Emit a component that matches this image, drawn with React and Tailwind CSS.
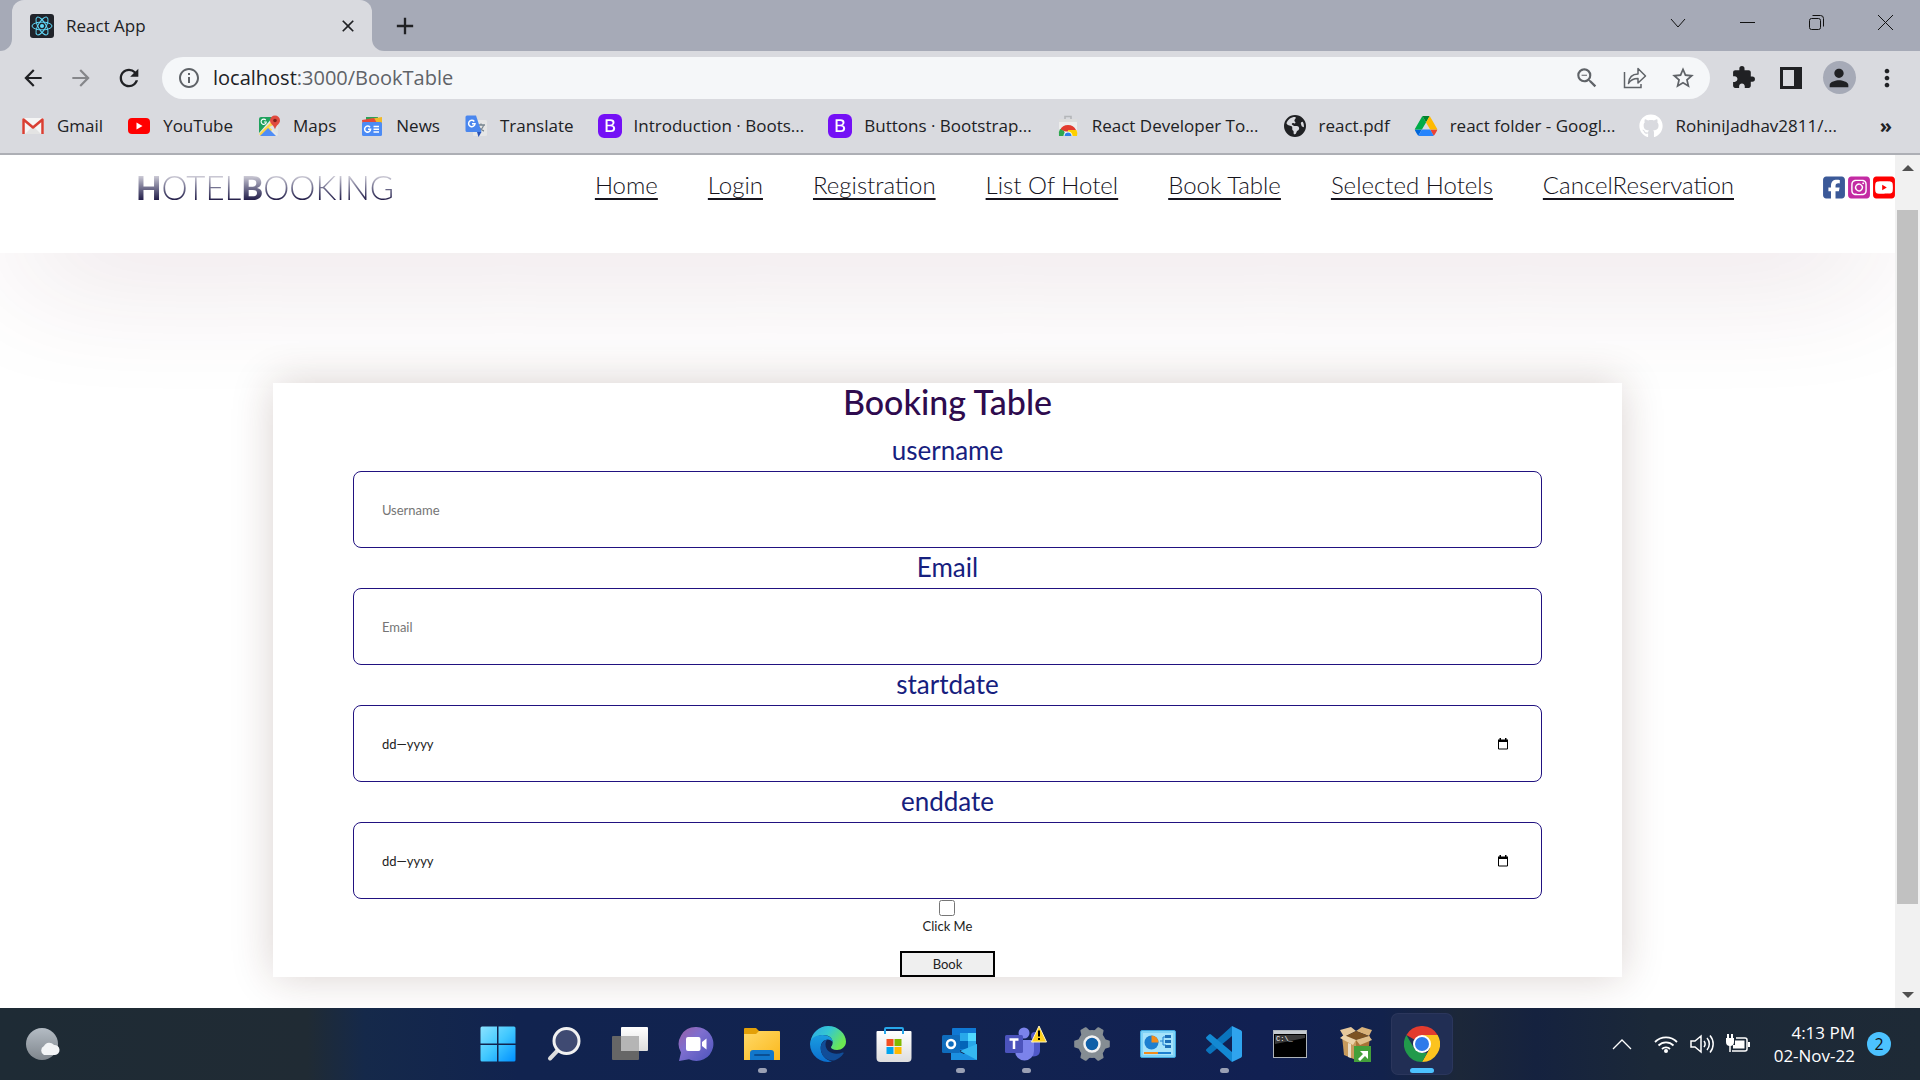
import React from "react";
import {
  MdAdd, MdArrowBack, MdArrowForward, MdClose, MdExtension, MdInfoOutline,
  MdMoreVert, MdPerson, MdRefresh, MdStarBorder, MdZoomOut,
} from "react-icons/md";
import { FaEarthAmericas, FaGithub, FaSquareFacebook, FaSquareInstagram, FaSquareYoutube } from "react-icons/fa6";
import { BsBootstrapFill } from "react-icons/bs";

const UI = "font-['Open_Sans','Noto_Sans',sans-serif]";
const PAGE = "font-['Lato','Open_Sans',sans-serif]";

/* ---------- browser icons ---------- */

const ReactLogo = () => (
  <svg viewBox="0 0 24 24" className="size-6 shrink-0">
    <rect width="24" height="24" rx="3" fill="#20232a" />
    <g fill="none" stroke="#61dafb" strokeWidth="1">
      <ellipse cx="12" cy="12" rx="10" ry="3.9" />
      <ellipse cx="12" cy="12" rx="10" ry="3.9" transform="rotate(60 12 12)" />
      <ellipse cx="12" cy="12" rx="10" ry="3.9" transform="rotate(120 12 12)" />
    </g>
    <circle cx="12" cy="12" r="2" fill="#61dafb" />
  </svg>
);

const GmailIcon = () => (
  <svg viewBox="0 0 24 24" className="size-6">
    <rect x="1" y="4" width="22" height="16" rx="1.5" fill="#f5f5f5" />
    <path d="M4 20 12 12l8 8z" fill="#e3e3e3" />
    <path d="M2.500 20V5.500L12 13.500l9.500-8V20" fill="none" stroke="#d93f33" strokeWidth="2.500" strokeLinejoin="round" />
  </svg>
);

const YouTubeIcon = () => (
  <svg viewBox="0 0 24 24" className="size-6">
    <rect x="1" y="4" width="22" height="16" rx="4" fill="#f00" />
    <path d="M9.500 8.500 15.500 12l-6 3.500z" fill="#fff" />
  </svg>
);

const MapsIcon = () => (
  <svg viewBox="0 0 24 24" className="size-6">
    <rect x="2" y="3" width="19" height="19" rx="2" fill="#e8e8e8" />
    <path d="M2 5a2 2 0 0 1 2-2h12L2 19z" fill="#1fa15d" />
    <path d="M2 20 17 5l4 2v3L9 22H4z" fill="#ffd347" />
    <path d="m11 14-8 8h16z" fill="#4f8df6" />
    <path d="m12 13 9 8V9z" fill="#dfe3e6" />
    <path d="M18 1.500a5 5 0 0 1 5 5c0 3.500-4 4.500-5 9-1-4.500-5-5.500-5-9a5 5 0 0 1 5-5z" fill="#e04a3f" />
    <circle cx="18" cy="6.500" r="1.800" fill="#7d2018" />
    <path d="M8.800 6.200A2.600 2.600 0 1 0 9.300 8H7" fill="none" stroke="#fff" strokeWidth="1.100" />
  </svg>
);

const NewsIcon = () => (
  <svg viewBox="0 0 24 24" className="size-6">
    <path d="M6 3h12v10H6z" fill="#2ea055" />
    <path d="m10 5 12-2v10H10z" fill="#f0b928" />
    <path d="m2 6 12-2 6 10H3z" fill="#e5493a" />
    <rect x="2" y="8" width="20" height="14" rx="1.500" fill="#4c8bf5" />
    <path d="M10 13.300a3 3 0 1 0 .6 2H8" fill="none" stroke="#fff" strokeWidth="1.500" />
    <path d="M13.500 12.500H19M13.500 15.200H19M13.500 18H19" stroke="#fff" strokeWidth="1.500" />
  </svg>
);

const TranslateIcon = () => (
  <svg viewBox="0 0 24 24" className="size-6">
    <rect x="9" y="6" width="14" height="16" rx="1.500" fill="#e6e6e6" />
    <path d="M13 11h8M17 9.500V11m2.500 0c-.5 3-3 5-5 6m.5-4c1 2 3 3.500 5 4" fill="none" stroke="#7a8790" strokeWidth="1.300" />
    <path d="M3 1.500h9L17.500 18H3A1.500 1.500 0 0 1 1.500 16.500V3A1.500 1.500 0 0 1 3 1.500z" fill="#4a86ee" />
    <path d="m13 18 1.500 5 3-5z" fill="#2a53b5" />
    <path d="M10.300 7.500A3.200 3.200 0 1 0 11 9.800H8" fill="none" stroke="#fff" strokeWidth="1.500" />
  </svg>
);

const BootstrapIcon = () => (
  <span className="flex size-6 items-center justify-center rounded-md bg-white">
    <BsBootstrapFill className="size-6 text-[#7410f5]" />
  </span>
);

const WebStoreIcon = () => (
  <svg viewBox="0 0 24 24" className="size-6">
    <path d="M9 5V2.500h6V5" fill="none" stroke="#b4b6b9" strokeWidth="1.600" />
    <path d="M3 5h18v17H3z" fill="#ececec" />
    <path d="M3 5h18v3H3z" fill="#dcdcdc" />
    <path d="M12 12a9 9 0 0 1 8 5h-8z" fill="#e23b2e" />
    <path d="M4 16a9 9 0 0 1 16 0l-8 2z" fill="#e23b2e" />
    <path d="M4 15a9 9 0 0 0-1 7h7l-2-5z" fill="#2fa74f" />
    <path d="M12 16h8.500a9 9 0 0 1 .5 6H12z" fill="#fdd000" />
    <path d="M7.500 22a4.500 4.500 0 1 1 9 0z" fill="#fff" />
    <path d="M8.500 22a3.500 3.500 0 1 1 7 0z" fill="#2f80e6" />
  </svg>
);

const DriveIcon = () => (
  <svg viewBox="0 0 87 78" className="h-5 w-6">
    <path d="m6.600 66.850 3.850 6.650c.8 1.400 1.950 2.500 3.300 3.300L27.500 53H0c0 1.550.4 3.100 1.200 4.500z" fill="#0066da" />
    <path d="M43.650 25 29.900 1.200c-1.350.8-2.500 1.900-3.300 3.300L1.200 48.500A9 9 0 0 0 0 53h27.500z" fill="#00ac47" />
    <path d="M73.550 76.800c1.350-.8 2.500-1.900 3.300-3.300l1.600-2.750L86.100 57.500c.8-1.400 1.200-2.950 1.200-4.500H59.800l5.850 11.500z" fill="#ea4335" />
    <path d="M43.650 25 57.400 1.200C56.050.4 54.500 0 52.900 0H34.400c-1.600 0-3.150.45-4.500 1.200z" fill="#00832d" />
    <path d="M59.800 53H27.500L13.750 76.800c1.350.8 2.900 1.200 4.500 1.200h50.800c1.600 0 3.150-.45 4.500-1.200z" fill="#2684fc" />
    <path d="m73.400 26.500-12.700-22c-.8-1.400-1.950-2.500-3.300-3.300L43.650 25 59.800 53h27.450c0-1.550-.4-3.100-1.200-4.500z" fill="#ffba00" />
  </svg>
);

const ShareIcon = () => (
  <svg viewBox="0 0 24 24" className="size-6" fill="none" stroke="currentColor" strokeWidth="1.500">
    <path d="M1.500 6v15.500H18V18" />
    <path d="M5.500 17.500C6 11.500 9.500 8 15 8V2.500l7.500 7.500-7.500 7v-4.500c-4.500 0-7.500 1.500-9.500 5z" strokeLinejoin="round" />
  </svg>
);

const SidePanelIcon = () => (
  <svg viewBox="0 0 22 22" className="size-[22px]">
    <path d="M0 0h22v22H0zM3 3v16h11V3z" fill="#202124" fillRule="evenodd" />
  </svg>
);

/* ---------- browser chrome ---------- */

const WINDOW_BUTTONS = [
  { label: "Search tabs", d: "M1 5l7 8 7-8" },
  { label: "Minimize", d: "M1 8.500h15" },
  { label: "Restore", d: "M3.500 4.500h7a2 2 0 0 1 2 2v7a2 2 0 0 1-2 2h-7a2 2 0 0 1-2-2v-7a2 2 0 0 1 2-2zM4.500 1.500h8a3 3 0 0 1 3 3v8" },
  { label: "Close window", d: "M1 1l15 15M16 1L1 16" },
];

function TabStrip() {
  return (
    <div className="flex h-[51px] justify-between bg-[#a6aab7]">
      <div className="flex">
        <div className="w-3 bg-[#d9dadf]"><div className="h-full rounded-br-xl bg-[#a6aab7]" /></div>
        <div className="flex w-[360px] items-center rounded-t-xl bg-[#d9dadf] pr-3 pl-[18px]">
          <ReactLogo />
          <span className="ml-3 flex-1 text-[17px] text-[#202124]">React App</span>
          <button aria-label="Close tab" className="flex size-6 items-center justify-center text-[#202124]"><MdClose className="size-5" /></button>
        </div>
        <div className="w-3 bg-[#d9dadf]"><div className="h-full rounded-bl-xl bg-[#a6aab7]" /></div>
        <button aria-label="New tab" className="flex w-[42px] items-center justify-center text-[#202124]"><MdAdd className="size-7" /></button>
      </div>
      <div className="flex h-11">
        {WINDOW_BUTTONS.map((b) => (
          <button key={b.label} aria-label={b.label} className="flex w-[69px] items-center justify-center">
            <svg viewBox="0 0 17 17" className="size-[17px]" fill="none" stroke="#111" strokeWidth="1"><path d={b.d} /></svg>
          </button>
        ))}
      </div>
    </div>
  );
}

const iconButton = "flex h-9 w-12 shrink-0 items-center justify-center text-[#202124]";

function Toolbar() {
  return (
    <div className="flex h-[53px] items-center px-[9px]">
      <button aria-label="Back" className={iconButton}><MdArrowBack className="size-[26px]" /></button>
      <button aria-label="Forward" className={`${iconButton} opacity-45`}><MdArrowForward className="size-[26px]" /></button>
      <button aria-label="Reload" className={iconButton}><MdRefresh className="size-[28px]" /></button>
      <div className="mx-[9px] flex h-[42px] flex-1 items-center rounded-full bg-[#f5f7f9] pr-[3px] pl-[15px] text-[#5f6368]">
        <MdInfoOutline className="size-6" />
        <p className="ml-3 flex-1 text-xl"><span className="text-[#202124]">localhost</span>:3000/BookTable</p>
        <button aria-label="Zoom" className="flex w-12 justify-center"><MdZoomOut className="size-[26px]" /></button>
        <button aria-label="Share" className="flex w-12 justify-center"><ShareIcon /></button>
        <button aria-label="Bookmark this page" className="flex w-12 justify-center"><MdStarBorder className="size-[26px]" /></button>
      </div>
      <button aria-label="Extensions" className={iconButton}><MdExtension className="size-[25px]" /></button>
      <button aria-label="Side panel" className={iconButton}><SidePanelIcon /></button>
      <button aria-label="Profile" className={iconButton}>
        <span className="flex size-[33px] items-center justify-center rounded-full bg-[#a6aab7]"><MdPerson className="size-7" /></span>
      </button>
      <button aria-label="Menu" className={iconButton}><MdMoreVert className="size-[28px]" /></button>
    </div>
  );
}

const BOOKMARKS = [
  { label: "Gmail", icon: <GmailIcon /> },
  { label: "YouTube", icon: <YouTubeIcon /> },
  { label: "Maps", icon: <MapsIcon /> },
  { label: "News", icon: <NewsIcon /> },
  { label: "Translate", icon: <TranslateIcon /> },
  { label: "Introduction · Boots...", icon: <BootstrapIcon /> },
  { label: "Buttons · Bootstrap...", icon: <BootstrapIcon /> },
  { label: "React Developer To...", icon: <WebStoreIcon /> },
  { label: "react.pdf", icon: <FaEarthAmericas className="size-[22px] text-[#202124]" /> },
  { label: "react folder - Googl...", icon: <DriveIcon /> },
  { label: "RohiniJadhav2811/...", icon: <FaGithub className="size-6 text-white" /> },
];

function BookmarksBar() {
  return (
    <nav aria-label="Bookmarks" className="flex h-[51px] items-center justify-between border-b-2 border-[#adafb5] pr-7 pb-1.5 pl-[21px]">
      <ul className="flex gap-6">
        {BOOKMARKS.map((b) => (
          <li key={b.label}>
            <a href="#" className="flex items-center gap-3 text-[17px] leading-6 whitespace-nowrap text-[#202124]">
              <span className="flex size-6 items-center justify-center">{b.icon}</span>
              {b.label}
            </a>
          </li>
        ))}
      </ul>
      <button aria-label="More bookmarks" className="text-xl leading-6 font-bold text-[#202124]">»</button>
    </nav>
  );
}

/* ---------- web page ---------- */

const LINKS = ["Home", "Login", "Registration", "List Of Hotel", "Book Table", "Selected Hotels", "CancelReservation"];

function SiteHeader() {
  return (
    <header className="flex h-[98px] items-start bg-white pt-3 pl-[136px] shadow-[0_30px_130px_-20px_rgba(95,30,55,0.2)]">
      <h1 className="bg-linear-to-b from-[#d5d3dc] from-20% to-[#1f1844] to-85% bg-clip-text text-[33px] leading-10 font-light text-transparent">
        <b className="font-black">H</b>OTEL<b className="font-black">B</b>OOKING
      </h1>
      <nav className="mr-[89px] ml-auto flex gap-[50px] text-2xl leading-9 font-light text-[#16141d]">
        {LINKS.map((l) => <a key={l} href="#" className="underline decoration-2 underline-offset-4">{l}</a>)}
      </nav>
      <div className="flex gap-[3px] pt-2">
        <a href="#" aria-label="Facebook"><FaSquareFacebook className="h-[25px] w-[22px] text-[#3b5998]" /></a>
        <a href="#" aria-label="Instagram"><FaSquareInstagram className="h-[25px] w-[22px] text-[#c32aa3]" /></a>
        <a href="#" aria-label="YouTube"><FaSquareYoutube className="h-[25px] w-[22px] text-[#f00]" /></a>
      </div>
    </header>
  );
}

const CalendarIcon = () => (
  <svg viewBox="0 0 12 12" className="size-3">
    <path d="M1.500 2.500h9v8.500h-9z" fill="none" stroke="#000" strokeWidth="1" />
    <path d="M1 1.500h10V4H1zM2.500 0h1.500v2H2.500zM8 0h1.500v2H8z" fill="#000" />
  </svg>
);

const FIELDS = [
  { id: "username", label: "username", type: "text", placeholder: "Username" },
  { id: "email", label: "Email", type: "email", placeholder: "Email" },
  { id: "startdate", label: "startdate", date: true },
  { id: "enddate", label: "enddate", date: true },
];

function Field({ id, label, type, placeholder, date }) {
  return (
    <div>
      <label htmlFor={id} className="mb-0.5 block text-center text-[26px] leading-[38px] text-[#16207e]">{label}</label>
      <div className="flex h-[77px] items-center rounded-lg border border-[#211280] pr-8 pl-7">
        <input
          id={id}
          type={date ? "text" : type}
          placeholder={placeholder}
          defaultValue={date ? "dd—yyyy" : undefined}
          className="min-w-0 flex-1 bg-transparent text-[13px] leading-5 text-[#222] outline-none placeholder:text-[#757575]"
        />
        {date && <button type="button" aria-label={`Choose ${label}`}><CalendarIcon /></button>}
      </div>
    </div>
  );
}

function BookingForm() {
  return (
    <form className="mx-auto mt-[130px] w-[71.2%] bg-white px-20 text-center shadow-[0_0_40px_rgba(70,30,20,0.2)]" onSubmit={(e) => e.preventDefault()}>
      <h2 className="mb-2.5 text-[34px] leading-[38px] font-medium text-[#2e0b4e]">Booking Table</h2>
      <div className="text-left">
        {FIELDS.map((f) => <Field key={f.id} {...f} />)}
      </div>
      <label className="flex flex-col items-center pt-px text-[13px] leading-5 text-[#222]">
        <input type="checkbox" className="size-4" />
        Click Me
      </label>
      <button className="mx-auto mt-[15px] block h-[26px] w-[95px] border-2 border-black bg-[#efefef] text-[13px] leading-5 text-[#222]">Book</button>
    </form>
  );
}

function Scrollbar() {
  return (
    <div aria-hidden="true" className="flex w-[25px] shrink-0 flex-col items-center bg-[#f1f1f1]">
      <svg viewBox="0 0 12 6" className="mt-2.5 mb-[39px] h-1.5 w-3 shrink-0" fill="#505050"><path d="M0 6 6 0l6 6z" /></svg>
      <div className="w-[21px] flex-[694] bg-[#c1c1c1]" />
      <div className="flex-[88]" />
      <svg viewBox="0 0 12 6" className="mb-2.5 h-1.5 w-3 shrink-0" fill="#505050"><path d="M0 0l6 6 6-6z" /></svg>
    </div>
  );
}

/* ---------- taskbar ---------- */

const StartIcon = () => (
  <svg viewBox="0 0 36 36" className="size-9">
    <linearGradient id="win" x1="0" y1="0" x2="1" y2="1"><stop stopColor="#8be3ff" /><stop offset=".5" stopColor="#41c8ff" /><stop offset="1" stopColor="#0090ff" /></linearGradient>
    <path d="M2 .5h15v17H.5V2A1.500 1.500 0 0 1 2 .5zM18.500.5H34A1.500 1.500 0 0 1 35.500 2v15.500h-17zM.5 19H17v16.500H2A1.500 1.500 0 0 1 .5 34zM18.500 19h17v15a1.500 1.500 0 0 1-1.500 1.500H18.500z" fill="url(#win)" />
  </svg>
);

const SearchIcon = () => (
  <svg viewBox="0 0 36 36" className="size-9">
    <path d="M13 23 4 32.500" stroke="#dcdcdc" strokeWidth="4" strokeLinecap="round" />
    <circle cx="20.500" cy="15" r="12.500" fill="#3f4a72" stroke="#f1f1f1" strokeWidth="3" />
  </svg>
);

const TaskViewIcon = () => (
  <svg viewBox="0 0 36 36" className="size-9">
    <linearGradient id="tv" x1="0" y1="0" x2="0" y2="1"><stop stopColor="#fff" /><stop offset="1" stopColor="#ddd" /></linearGradient>
    <rect x="0" y="10" width="27" height="24" rx="1" fill="#666" />
    <rect x="9" y="1" width="27" height="24" rx="1" fill="url(#tv)" />
    <path d="M9 10h18v15H9z" fill="#b5b5b5" />
  </svg>
);

const ChatIcon = () => (
  <svg viewBox="0 0 36 36" className="size-9">
    <linearGradient id="chat" x1="0" y1="0" x2="1" y2="1"><stop stopColor="#9a5fa5" /><stop offset=".4" stopColor="#7f6fcf" /><stop offset="1" stopColor="#4b53bc" /></linearGradient>
    <path d="M18.500 1a17 17 0 1 1-7.500 32.300L1 35l2-8.500A17 17 0 0 1 18.500 1z" fill="url(#chat)" />
    <rect x="8" y="11" width="14.500" height="14" rx="2" fill="#fff" />
    <path d="m24 16 4.500-3.500v11L24 20z" fill="#fff" />
  </svg>
);

const FolderIcon = () => (
  <svg viewBox="0 0 36 36" className="size-9">
    <linearGradient id="fold" x1="0" y1="0" x2="1" y2="1"><stop stopColor="#ffd968" /><stop offset="1" stopColor="#fbb81c" /></linearGradient>
    <path d="M0 3a1 1 0 0 1 1-1h11l4 4v4H0z" fill="#e3a008" />
    <path d="M0 8h12l3-3h20a1 1 0 0 1 1 1v28H0z" fill="url(#fold)" />
    <path d="M6 34V27a3 3 0 0 1 3-3h18a3 3 0 0 1 3 3v7z" fill="#1177cb" />
    <path d="M11 29h14" stroke="#0a4f93" strokeWidth="2" strokeLinecap="round" />
  </svg>
);

const EdgeIcon = () => (
  <svg viewBox="0 0 36 36" className="size-9">
    <linearGradient id="edgeA" x1="0" y1="0" x2="1" y2=".5"><stop stopColor="#2ba6e8" /><stop offset=".5" stopColor="#35c7d1" /><stop offset="1" stopColor="#6be852" /></linearGradient>
    <linearGradient id="edgeB" x1="0" y1="0" x2="0" y2="1"><stop stopColor="#1a9de0" /><stop offset="1" stopColor="#0b6fcf" /></linearGradient>
    <path d="M.5 16C1.500 7 9 0 18 0c10.500 0 18 8 18 15.500 0 5.500-4.500 8.500-9 8.500-4 0-6-1.500-6-2.700 0-1 1.700-1.800 1.700-4.800 0-4.500-4-7.500-9.200-7.500C8 9 3 12 .5 16z" fill="url(#edgeA)" />
    <path d="M0 18C0 12 6 9 12.500 9c6 0 10.200 3 10.200 7-1.200-1.500-3-2.500-5-2.500-4 0-7 3.500-7 8.500 0 7 5 12 11.300 13.500A18 18 0 0 1 0 18z" fill="url(#edgeB)" />
    <path d="M15.500 14c-2.800 1.500-4.800 4.500-4.800 8 0 7.500 6.300 14 14.300 12.300 3.500-1.300 6.500-3.800 8.500-6.800.5-.8-.3-1.300-1-1-8 3.500-17-.5-17-8 0-1.800.5-3.500 1.500-4.500z" fill="#114d98" />
  </svg>
);

const StoreIcon = () => (
  <svg viewBox="0 0 36 36" className="size-9">
    <path d="M9 8V3a1 1 0 0 1 1-1h16a1 1 0 0 1 1 1v5" fill="none" stroke="#27a7ea" strokeWidth="2" />
    <linearGradient id="st" x1="0" y1="0" x2="0" y2="1"><stop stopColor="#fff" /><stop offset="1" stopColor="#dedede" /></linearGradient>
    <path d="M.5 6a1 1 0 0 1 1-1h33a1 1 0 0 1 1 1v26a4 4 0 0 1-4 4H4.500a4 4 0 0 1-4-4z" fill="url(#st)" />
    <path d="M9 5v3M27 5v3" stroke="#27a7ea" strokeWidth="2" />
    <path d="M10.500 13h7v7h-7z" fill="#f25022" /><path d="M18.500 13h7v7h-7z" fill="#7fba00" />
    <path d="M10.500 21h7v7h-7z" fill="#00a4ef" /><path d="M18.500 21h7v7h-7z" fill="#ffb900" />
  </svg>
);

const OutlookIcon = () => (
  <svg viewBox="0 0 36 36" className="size-9">
    <path d="M10 3a1 1 0 0 1 1-1h23v22H10z" fill="#0f78d4" />
    <path d="M18 7h8v8h-8z" fill="#28a8ea" /><path d="M26 7h8v8h-8z" fill="#50d9ff" />
    <path d="M18 15h8v8h-8z" fill="#0364b8" /><path d="M26 15h8v8h-8z" fill="#28a8ea" />
    <path d="M9 34V22l13 6 13-10v15a1 1 0 0 1-1 1z" fill="#1b8fe0" />
    <path d="m35 34-17-9 17-7z" fill="#35b8f1" />
    <rect x="0" y="9" width="18" height="18" rx="1.500" fill="#0f6cbd" />
    <circle cx="9" cy="18" r="4" fill="none" stroke="#fff" strokeWidth="2.500" />
  </svg>
);

const TeamsIcon = () => (
  <svg viewBox="0 0 42 36" className="h-9 w-[42px]">
    <circle cx="19" cy="7" r="5.500" fill="#7b83eb" />
    <circle cx="30" cy="10" r="4" fill="#5059c9" />
    <path d="M25 14h10v11a6 6 0 0 1-10 4z" fill="#5059c9" />
    <path d="M10 14h19v11a9.500 9.500 0 0 1-19 0z" fill="#7b83eb" />
    <rect x="0" y="9" width="18" height="18" rx="1.500" fill="#4b53bc" />
    <path d="M4.500 13.500h9M9 13.500V23" stroke="#fff" strokeWidth="2.500" />
    <path d="M34 0 41.500 16h-15z" fill="#ffd21e" stroke="#fff3c4" strokeWidth="1" strokeLinejoin="round" />
    <path d="M34 4.500v6M34 12v2" stroke="#000" strokeWidth="2" />
  </svg>
);

const GEAR_TEETH = [0, 60, 120, 180, 240, 300];

const SettingsIcon = () => (
  <svg viewBox="0 0 36 36" className="size-9">
    <g fill="#858d93">
      <circle cx="18" cy="18" r="14" />
      {GEAR_TEETH.map((a) => (
        <path key={a} d="M27 12l8 2.500a1 1 0 0 1 .8 1v5a1 1 0 0 1-.8 1L27 24z" transform={`rotate(${a} 18 18)`} />
      ))}
    </g>
    <circle cx="18" cy="18" r="7.500" fill="#0f5fa8" stroke="#f2f2f2" strokeWidth="2.500" />
  </svg>
);

const ControlPanelIcon = () => (
  <svg viewBox="0 0 36 36" className="size-9">
    <rect x=".5" y="4.500" width="35" height="27" rx="1.500" fill="#7fd3f7" stroke="#3fa6dd" />
    <rect x="3" y="7" width="30" height="22" fill="#a5e3fb" />
    <circle cx="11.500" cy="16.500" r="7" fill="#1c7fd0" />
    <path d="M11.500 16.500V9.500a7 7 0 0 1 7 7z" fill="#f28c1c" />
    <path d="M20 15h3v-4h3M23 15v4h3" fill="none" stroke="#1c7fd0" />
    <path d="M25 9h6v3h-6zM25 14h6v3h-6zM25 19h6v3h-6z" fill="#1c6fb8" />
    <path d="M4 27h14" stroke="#f28c1c" strokeWidth="2" /><path d="M18 27h13" stroke="#1c7fd0" strokeWidth="2" />
  </svg>
);

const CodeIcon = () => (
  <svg viewBox="0 0 36 36" className="size-9">
    <path d="M26 0v10L5 27.500a1.500 1.500 0 0 1-2 0L.6 25.300a1.500 1.500 0 0 1 0-2.200z" fill="#0a74bd" />
    <path d="M26 36V26L5 8.500a1.500 1.500 0 0 0-2 0L.6 10.700a1.500 1.500 0 0 0 0 2.200z" fill="#1389d3" />
    <path d="M26 0l8.800 4.200A2 2 0 0 1 36 6v24a2 2 0 0 1-1.200 1.800L26 36z" fill="#2fa4ee" />
  </svg>
);

const TerminalIcon = () => (
  <svg viewBox="0 0 34 36" className="h-9 w-[34px]">
    <rect x=".5" y="4.500" width="33" height="27" fill="#000" stroke="#aeb4ba" />
    <path d="M1 5h32v3H1z" fill="#c6cbd0" />
    <path d="M2 9h30v3L2 18z" fill="#3a3a3a" />
    <text x="3" y="15" fontSize="7" fill="#fff" fontFamily="Liberation Mono">C:\_</text>
  </svg>
);

const PackageIcon = () => (
  <svg viewBox="0 0 36 36" className="size-9">
    <path d="M4 10 18 14v20L6 29z" fill="#c79a5c" /><path d="M18 14l14-4-2 19-12 5z" fill="#a87437" />
    <path d="m2 4 11-3 5 4-12 6z" fill="#e6c89b" /><path d="m18 5 6-4 10 3-3 6z" fill="#d9b27a" />
    <path d="M4 10l2 1 12-6 13 5-13 4z" fill="#7d5222" />
    <path d="m2 12 4-3 12 5-3 5z" fill="#ecd2a8" /><path d="m18 14 13-4 3 4-12 5z" fill="#e0be8a" />
    <path d="m10 17 3 1v14l-3-1z" fill="#e9dcc5" />
    <rect x="16" y="20" width="17" height="16" fill="#43a03a" />
    <path d="M20 33l5-5-3-3h8v8l-3-3-5 5z" fill="#fff" />
  </svg>
);

const ChromeIcon = () => (
  <svg viewBox="0 0 36 36" className="size-9">
    <path d="M18 18 2.400 9A18 18 0 0 1 33.600 9z" fill="#e33b2e" />
    <path d="M18 9h15.600A18 18 0 0 1 18 36l7.800-13.500z" fill="#fcc31e" />
    <path d="M2.400 9l7.800 13.500L18 27h5.200L18 36A18 18 0 0 1 2.400 9z" fill="#219a4b" />
    <circle cx="18" cy="18" r="9" fill="#fff" /><circle cx="18" cy="18" r="7" fill="#2f7bea" />
  </svg>
);

const APPS = [
  { name: "Start", icon: <StartIcon /> },
  { name: "Search", icon: <SearchIcon /> },
  { name: "Task view", icon: <TaskViewIcon /> },
  { name: "Chat", icon: <ChatIcon /> },
  { name: "File Explorer", icon: <FolderIcon />, running: true },
  { name: "Edge", icon: <EdgeIcon /> },
  { name: "Store", icon: <StoreIcon /> },
  { name: "Outlook", icon: <OutlookIcon />, running: true },
  { name: "Teams", icon: <TeamsIcon />, running: true },
  { name: "Settings", icon: <SettingsIcon /> },
  { name: "Control Panel", icon: <ControlPanelIcon /> },
  { name: "VS Code", icon: <CodeIcon />, running: true },
  { name: "Command Prompt", icon: <TerminalIcon /> },
  { name: "Package", icon: <PackageIcon /> },
  { name: "Chrome", icon: <ChromeIcon />, active: true },
];

function Taskbar() {
  return (
    <footer className="grid h-[72px] shrink-0 grid-cols-[1fr_auto_1fr] items-center bg-[linear-gradient(90deg,#1e2b35_0%,#202b34_16%,#15294a_19%,#11234f_27%,#122350_50%,#112052_66%,#12224c_72%,#1c2739_76%,#15223f_80%,#1b2838_86%,#1e2a36_100%)]">
      <button aria-label="Weather" className="ml-6 w-10">
        <svg viewBox="0 0 36 34" className="h-[34px] w-9">
          <linearGradient id="moon" x1="0" y1="0" x2="0" y2="1"><stop stopColor="#b4bcc4" /><stop offset="1" stopColor="#7f868d" /></linearGradient>
          <circle cx="18" cy="17" r="16" fill="url(#moon)" />
          <path d="M20 28a5 5 0 0 1 0-9 6 6 0 0 1 10-1 5 5 0 0 1 1 10z" fill="#f2f4f6" />
        </svg>
      </button>
      <div className="flex gap-1.5">
        {APPS.map((a) => (
          <button
            key={a.name}
            aria-label={a.name}
            className={`flex h-[60px] w-[60px] flex-col items-center justify-between rounded-md pt-3 pb-px ${a.active ? "bg-[#212e54] ring-1 ring-[#2b365c]" : ""}`}
          >
            {a.icon}
            {a.running && <span className="h-[5px] w-[9px] rounded-full bg-[#9aa0b4]" />}
            {a.active && <span className="h-[5px] w-6 rounded-full bg-[#4cc2ff]" />}
          </button>
        ))}
      </div>
      <div className="flex items-center justify-end gap-3 pr-[29px] text-white">
        <button aria-label="Hidden icons" className="mr-2.5">
          <svg viewBox="0 0 20 12" className="h-3 w-5" fill="none" stroke="#fff" strokeWidth="1.300"><path d="M1 11l9-9 9 9" /></svg>
        </button>
        <svg viewBox="0 0 24 20" className="h-5 w-6" fill="none" stroke="#fff" strokeWidth="1.800">
          <path d="M1 8a15.500 15.500 0 0 1 22 0M4.500 11.500a10.600 10.600 0 0 1 15 0M8 15a5.700 5.700 0 0 1 8 0" /><circle cx="12" cy="17" r="2" fill="#fff" stroke="none" />
        </svg>
        <svg viewBox="0 0 24 20" className="h-5 w-6" fill="none" stroke="#fff" strokeWidth="1.500">
          <path d="M1 7h4l6-5v16l-6-5H1zM14 7a5 5 0 0 1 0 6M17 4a9 9 0 0 1 0 12M20 1.500a13 13 0 0 1 0 17" />
        </svg>
        <svg viewBox="0 0 24 20" className="h-5 w-6" fill="none" stroke="#fff" strokeWidth="1.500">
          <path d="M10 4h9a2 2 0 0 1 2 2v9a2 2 0 0 1-2 2H6M4 11v7" />
          <path d="M9 6.500h9.500v8H7V11h2zM0 4h8v4a4 4 0 0 1-8 0zM1 0h2v4H1zM5 0h2v4H5zM22 8h2v5h-2z" fill="#fff" stroke="none" />
        </svg>
        <div className="ml-3 text-right text-[17px] leading-[23px]"><p>4:13 PM</p><p>02-Nov-22</p></div>
        <span className="flex size-6 items-center justify-center rounded-full bg-[#4cc2ff] text-base text-[#111]">2</span>
      </div>
    </footer>
  );
}

export default function App() {
  return (
    <div className={`flex h-screen flex-col overflow-hidden bg-white ${UI}`}>
      <div className="shrink-0 bg-[#d9dadf]">
        <TabStrip />
        <Toolbar />
        <BookmarksBar />
      </div>
      <div className="flex min-h-0 flex-1">
        <main className={`min-w-0 flex-1 overflow-hidden bg-white ${PAGE}`}>
          <SiteHeader />
          <BookingForm />
        </main>
        <Scrollbar />
      </div>
      <Taskbar />
    </div>
  );
}
